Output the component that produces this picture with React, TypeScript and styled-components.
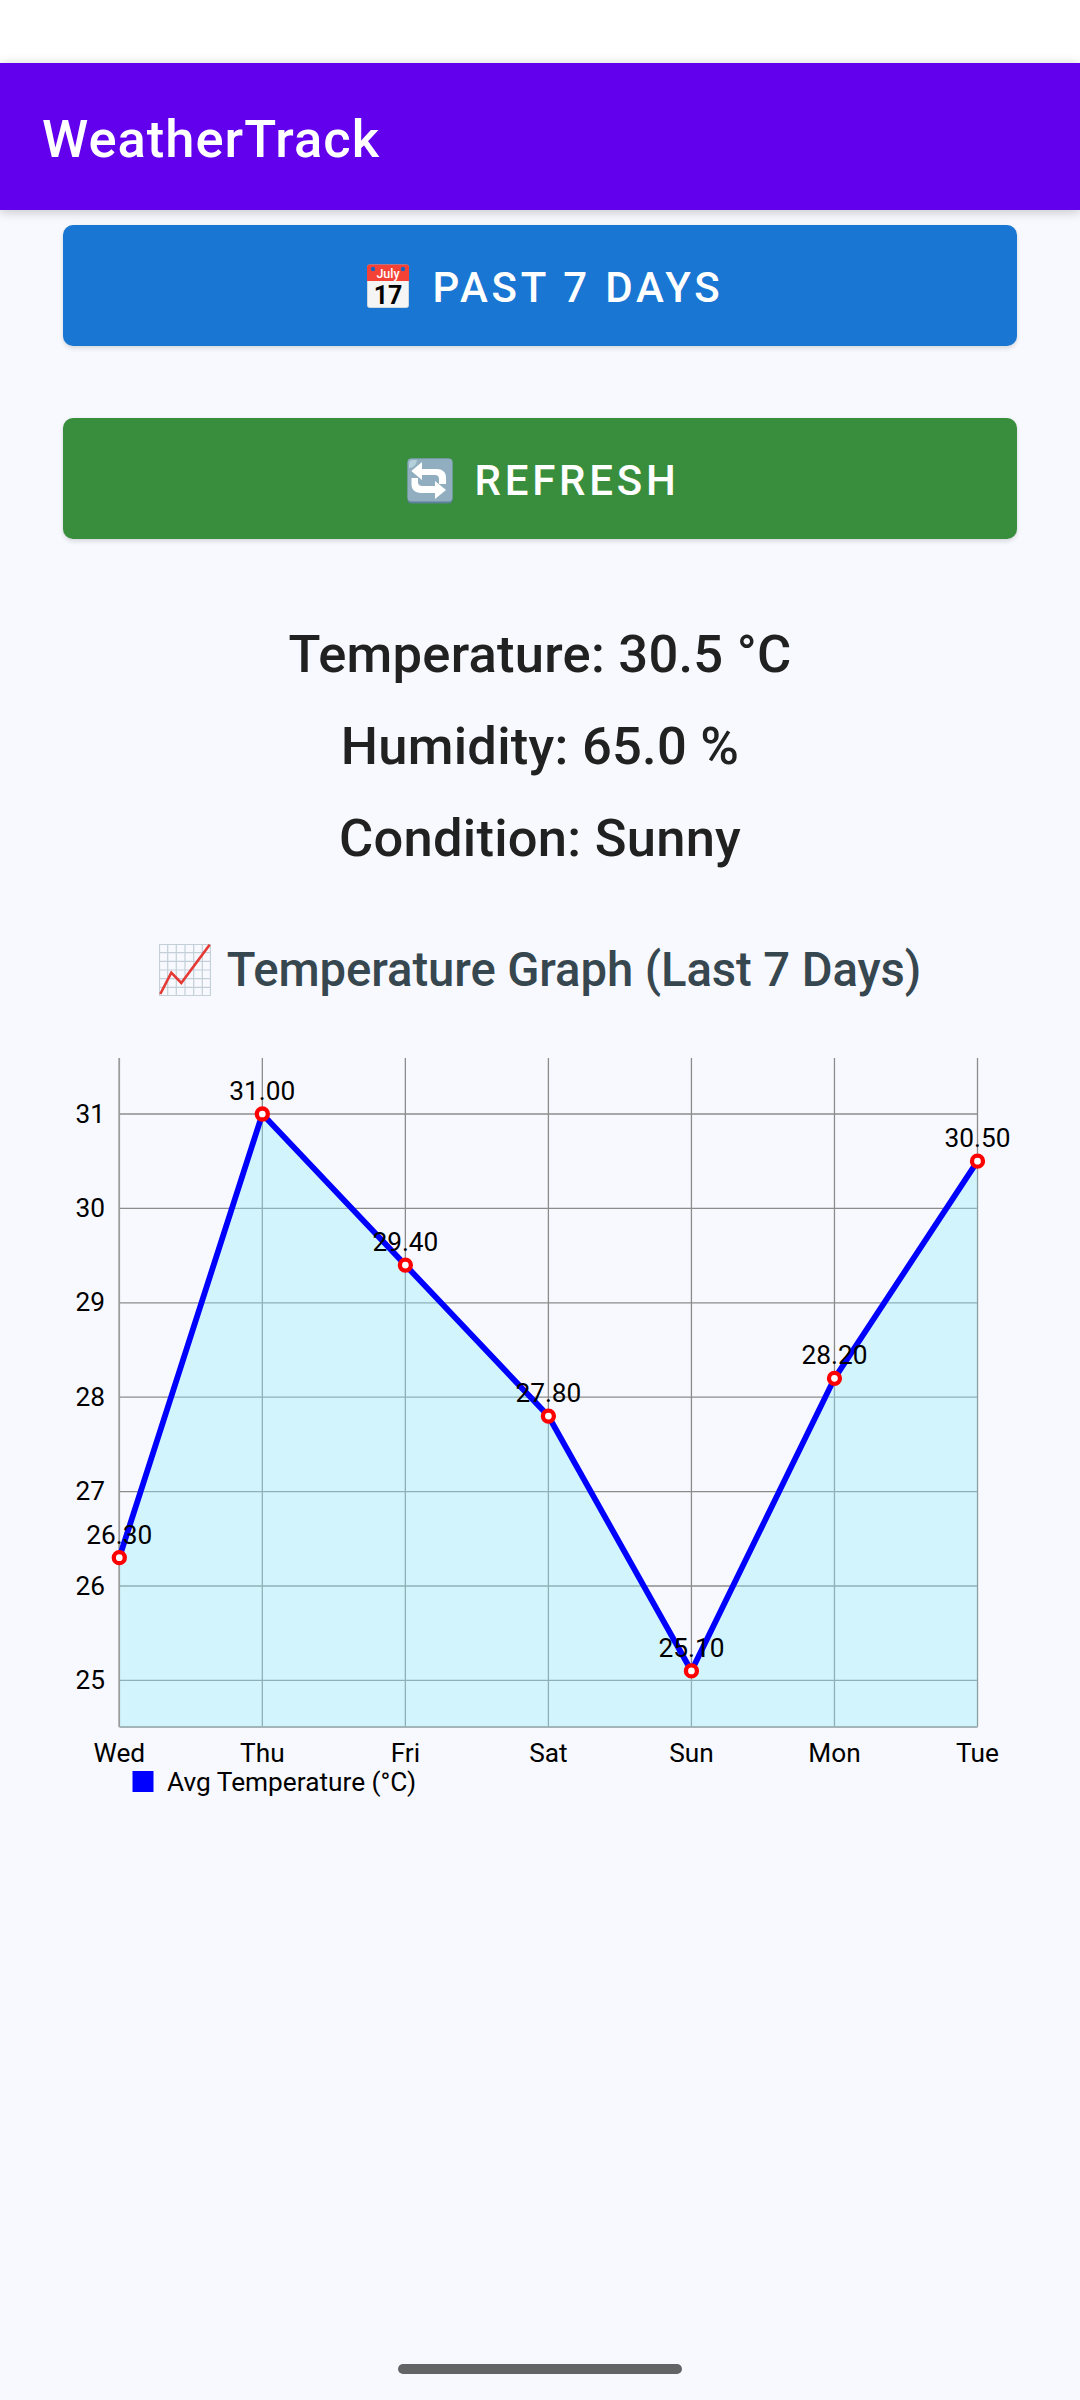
import React from "react";
import styled, { createGlobalStyle } from "styled-components";

const Global = createGlobalStyle`
  html, body { margin: 0; padding: 0; background: #f8f9fe; }
  body { font-family: Roboto, "Liberation Sans", sans-serif; }
`;

const Page = styled.div`
  width: 1080px;
  height: 2400px;
  display: flex;
  flex-direction: column;
  background: #f8f9fe;
  overflow: hidden;
`;
const StatusBar = styled.div`
  height: 63px;
  flex: none;
  background: #ffffff;
`;
const Header = styled.header`
  height: 147px;
  flex: none;
  display: flex;
  align-items: center;
  padding-left: 42px;
  background: #6200ee;
  box-shadow: 0 0 10px rgba(0, 0, 0, 0.14), 0 5px 10px rgba(0, 0, 0, 0.08);
  position: relative;
`;
const Title = styled.h1`
  margin: 0;
  padding-top: 5px;
  font-size: 52.5px;
  font-weight: 500;
  letter-spacing: 1px;
  color: #ffffff;
  line-height: 1;
`;
const Actions = styled.div`
  display: flex;
  flex-direction: column;
  gap: 72px;
  padding: 15px 63px 0;
`;
const ActionButton = styled.button<{ $bg: string; $gap: number; $inset: number }>`
  height: 121px;
  padding: 0 0 0 ${(p) => p.$inset}px;
  border: 0;
  border-radius: 10px;
  background: ${(p) => p.$bg};
  color: #ffffff;
  font: 500 42px Roboto, sans-serif;
  letter-spacing: 0.0892857em;
  display: flex;
  align-items: center;
  justify-content: center;
  gap: ${(p) => p.$gap}px;
  box-shadow: 0 3px 4px rgba(0, 0, 0, 0.1), 0 0 3px rgba(0, 0, 0, 0.06);
`;
const ButtonLabel = styled.span`
  padding-top: 3px;
`;
const CalendarSvg = styled.svg`
  flex: none;
  letter-spacing: 0;
`;
const RefreshSvg = styled.svg`
  flex: none;
  margin-top: 4px;
`;
const Stats = styled.div`
  margin-top: 68px;
  padding-top: 1px;
  display: flex;
  flex-direction: column;
  align-items: center;
`;
const Stat = styled.div`
  height: 92px;
  line-height: 92px;
  font-size: 52.5px;
  font-weight: 500;
  letter-spacing: 0.25px;
  color: #212121;
`;
const GraphHeading = styled.h2`
  margin: 55px 0 40px;
  height: 60px;
  padding-top: 1px;
  display: flex;
  align-items: center;
  justify-content: center;
  gap: 16px;
  font-size: 47.25px;
  font-weight: 500;
  letter-spacing: -0.1px;
  color: #37474f;
`;
const Chart = styled.svg`
  display: block;
  width: 1080px;
  height: 770px;
  flex: none;
`;
const ChartText = styled.text`
  font-family: Roboto, sans-serif;
  font-size: 26.25px;
  fill: #000000;
`;
const HomeBar = styled.div`
  margin: auto auto 26px;
  width: 284px;
  height: 10px;
  border-radius: 5px;
  background: #636466;
`;

const CalendarIcon = () => (
  <CalendarSvg width="42" height="44" viewBox="0 0 42 44">
    <rect x="0.5" y="1" width="41" height="42.5" rx="2" fill="#f5f5f5" stroke="#cfd8dc" />
    <path d="M0 3a2.5 2.5 0 0 1 2.500-2.500h37a2.500 2.500 0 0 1 2.500 2.500v14H0z" fill="#f44336" />
    <circle cx="6" cy="5" r="2.200" fill="#1565c0" />
    <circle cx="36" cy="5" r="2.200" fill="#1565c0" />
    <text x="21" y="14" textAnchor="middle" fontFamily="Roboto, sans-serif" fontSize="12.500" fontWeight="500" fill="#ffffff">July</text>
    <text x="21" y="39.500" textAnchor="middle" fontFamily="Roboto, sans-serif" fontSize="25" fontWeight="700" fill="#000000">17</text>
  </CalendarSvg>
);

const RefreshIcon = () => (
  <RefreshSvg width="46" height="46" viewBox="0 0 46 46">
    <rect x="0.500" y="0.500" width="45" height="45" rx="4" fill="#5c8198" />
    <rect x="0.500" y="0.500" width="45" height="43" rx="4" fill="#90aebf" />
    <path d="M2 6a4 4 0 0 1 4-4h4a8 8 0 0 1-8 8z" fill="#b5d0da" />
    <path d="M15 4L4.300 13L15 22V17H28C31 17 32 19 32 21V26H39V19C39 14 35 11 30 11H15Z" fill="#ffffff" />
    <path d="M28 23V28H16C13 28 11 27 11 24V20H4.500V27C4.500 32 9 35 14 35H28V41L39 32Z" fill="#ffffff" />
  </RefreshSvg>
);

const GraphIcon = () => {
  const ticks = [0.5, 8.7, 17.3, 26, 34.7, 43.3, 51.5];
  return (
    <svg width="52" height="52" viewBox="0 0 52 52">
      {ticks.map((t) => (
        <g key={t} stroke="#c3d0d7" strokeWidth="1.200">
          <line x1={t} y1="0" x2={t} y2="52" />
          <line x1="0" y1={t} x2="52" y2={t} />
        </g>
      ))}
      <polyline points="1.300,50 12.300,28.700 22.300,39 50.700,0.700" fill="none" stroke="#e53935" strokeWidth="2.600" />
    </svg>
  );
};

const days = ["Wed", "Thu", "Fri", "Sat", "Sun", "Mon", "Tue"];
const temps = [26.3, 31, 29.4, 27.8, 25.1, 28.2, 30.5];
const yTicks = [25, 26, 27, 28, 29, 30, 31];
const originY = 1040;
const left = 119.3;
const right = 977.5;
const stepX = (right - left) / 6;
const top = 1058 - originY;
const bottom = 1727 - originY;
const xOf = (i: number) => left + stepX * i;
const yOf = (v: number) => 1114 - originY + (31 - v) * 94.4;
const points = temps.map((t, i) => `${xOf(i)},${yOf(t)}`).join(" ");
const area = `${left},${bottom} ${points} ${right},${bottom}`;

const TemperatureChart = () => (
  <Chart viewBox="0 0 1080 770">
    {days.map((d, i) => (
      <line key={d} x1={xOf(i)} y1={top} x2={xOf(i)} y2={bottom} stroke="#8c8c8c" strokeWidth="1.300" />
    ))}
    {yTicks.map((v) => (
      <line key={v} x1={left} y1={yOf(v)} x2={right} y2={yOf(v)} stroke="#8c8c8c" strokeWidth="1.300" />
    ))}
    <polygon points={area} fill="#94ecfc" fillOpacity="0.38" />
    <line x1={left} y1={top} x2={left} y2={bottom} stroke="#9c9c9c" strokeWidth="1.600" />
    <line x1={left} y1={bottom} x2={right} y2={bottom} stroke="#a5b4ba" strokeWidth="2" />
    <polyline points={points} fill="none" stroke="#0000ff" strokeWidth="5.800" />
    {temps.map((t, i) => (
      <circle key={i} cx={xOf(i)} cy={yOf(t)} r="5.500" fill="#ffffff" stroke="#ff0000" strokeWidth="4.300" />
    ))}
    {temps.map((t, i) => (
      <ChartText key={i} x={xOf(i)} y={yOf(t) - 14} textAnchor="middle">{t.toFixed(2)}</ChartText>
    ))}
    {yTicks.map((v) => (
      <ChartText key={v} x={105} y={yOf(v) + 8.500} textAnchor="end">{v}</ChartText>
    ))}
    {days.map((d, i) => (
      <ChartText key={d} x={xOf(i)} y={722} textAnchor="middle">{d}</ChartText>
    ))}
    <rect x="132.500" y="731" width="21" height="21" fill="#0000ff" />
    <ChartText x={167} y={751}>Avg Temperature (°C)</ChartText>
  </Chart>
);

export default function App() {
  return (
    <Page>
      <Global />
      <StatusBar />
      <Header>
        <Title>WeatherTrack</Title>
      </Header>
      <Actions>
        <ActionButton $bg="#1976d2" $gap={24} $inset={10}>
          <CalendarIcon />
          <ButtonLabel>PAST 7 DAYS</ButtonLabel>
        </ActionButton>
        <ActionButton $bg="#388e3c" $gap={22} $inset={6}>
          <RefreshIcon />
          <ButtonLabel>REFRESH</ButtonLabel>
        </ActionButton>
      </Actions>
      <Stats>
        <Stat>Temperature: 30.5 °C</Stat>
        <Stat>Humidity: 65.0 %</Stat>
        <Stat>Condition: Sunny</Stat>
      </Stats>
      <GraphHeading>
        <GraphIcon />
        Temperature Graph (Last 7 Days)
      </GraphHeading>
      <TemperatureChart />
      <HomeBar />
    </Page>
  );
}
